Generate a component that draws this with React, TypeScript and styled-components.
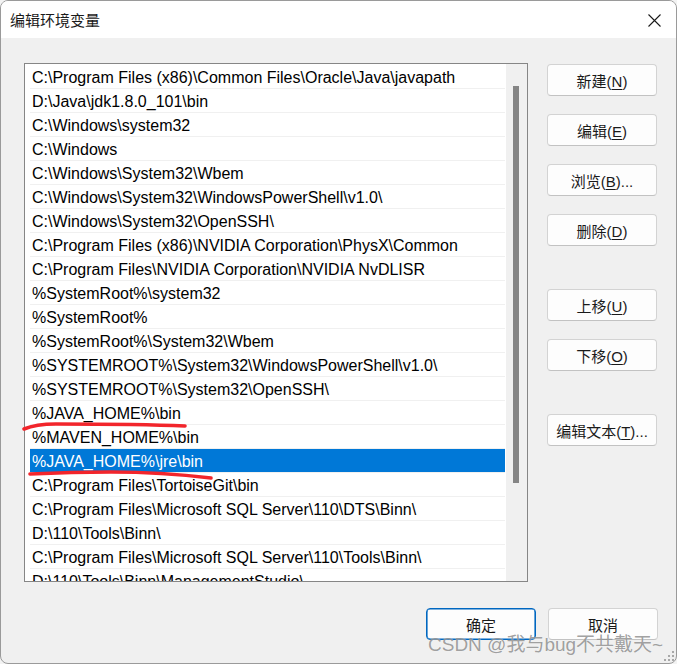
import React from "react";
import styled, { createGlobalStyle } from "styled-components";

const Global = createGlobalStyle`
  html, body { margin: 0; padding: 0; background: #f3f3f3; }
  body { font-family: "Liberation Sans", "Noto Sans CJK SC", sans-serif; }
  * { box-sizing: border-box; }
`;

const Window = styled.div`
  position: relative;
  width: 677px;
  height: 664px;
  background: #f0f0f0;
  border: 1px solid #9a9a9a;
  border-radius: 8px;
  overflow: hidden;
  display: flex;
  flex-direction: column;
  color: #000;
`;

const TitleBar = styled.div`
  height: 37px;
  flex: none;
  background: #ffffff;
  display: flex;
  align-items: center;
  justify-content: space-between;
  padding: 0 15px 0 9px;
`;

const Title = styled.div`
  font-family: "Noto Sans CJK SC", sans-serif;
  font-size: 15px;
  color: #1a1a1a;
  padding-bottom: 1px;
`;

const CloseBtn = styled.div`
  width: 13px;
  height: 13px;
  display: flex;
  margin-top: 1px;
`;

const Body = styled.div`
  display: flex;
  gap: 19px;
  padding: 25px 19px 0 23px;
`;

const ListBox = styled.div`
  width: 504px;
  height: 519px;
  border: 1px solid #868686;
  background: #ffffff;
  display: flex;
  flex: none;
`;

const Items = styled.div`
  flex: 1;
  overflow: hidden;
  padding: 1px 1px 0 5px;
`;

const Row = styled.div<{ $selected?: boolean }>`
  height: 24px;
  line-height: 21px;
  padding-top: 1.5px;
  border-bottom: 1px solid #f0f0f0;
  padding-left: 2px;
  font-size: 16px;
  white-space: nowrap;
  background: ${(p) => (p.$selected ? "#0078d7" : "transparent")};
  color: ${(p) => (p.$selected ? "#ffffff" : "#000000")};
`;

const ScrollTrack = styled.div`
  width: 21px;
  flex: none;
  background: #f0f0f0;
  padding: 22px 0 0 7px;
`;

const Thumb = styled.div`
  width: 6px;
  height: 397px;
  background: #858585;
`;

const ButtonColumn = styled.div`
  display: flex;
  flex-direction: column;
  gap: 18px;
  padding-top: 1px;
`;

const Button = styled.button<{ $primary?: boolean; $groupStart?: boolean }>`
  width: 110px;
  height: 32px;
  flex: none;
  margin-top: ${(p) => (p.$groupStart ? "25px" : "0")};
  background: #fdfdfd;
  border: 1px solid ${(p) => (p.$primary ? "#0067c0" : "#d3d3d3")};
  border-bottom-color: ${(p) => (p.$primary ? "#0067c0" : "#c2c2c2")};
  box-shadow: ${(p) => (p.$primary ? "inset 0 0 0 0.6px #0067c0" : "none")};
  border-radius: 4px;
  font-family: "Liberation Sans", "Noto Sans CJK SC", sans-serif;
  font-size: 15px;
  color: #1a1a1a;
  padding: 0;
  display: flex;
  align-items: center;
  justify-content: center;
  u { text-underline-offset: 2px; }
`;

const Footer = styled.div`
  display: flex;
  justify-content: flex-end;
  gap: 12px;
  padding: 26px 18px 0 0;
`;

const Marks = styled.svg`
  position: absolute;
  left: 0;
  top: 0;
  pointer-events: none;
`;

const Watermark = styled.div`
  position: absolute;
  left: 427px;
  top: 628px;
  font-family: "Liberation Sans", "Noto Sans CJK SC", sans-serif;
  font-size: 19px;
  color: rgba(100, 100, 100, 0.62);
  text-shadow: 0 0 1px rgba(255, 255, 255, 0.8);
  white-space: nowrap;
  pointer-events: none;
`;

const Grip = styled.svg`
  position: absolute;
  right: 1px;
  bottom: 1px;
`;

const paths = [
  "C:\\Program Files (x86)\\Common Files\\Oracle\\Java\\javapath",
  "D:\\Java\\jdk1.8.0_101\\bin",
  "C:\\Windows\\system32",
  "C:\\Windows",
  "C:\\Windows\\System32\\Wbem",
  "C:\\Windows\\System32\\WindowsPowerShell\\v1.0\\",
  "C:\\Windows\\System32\\OpenSSH\\",
  "C:\\Program Files (x86)\\NVIDIA Corporation\\PhysX\\Common",
  "C:\\Program Files\\NVIDIA Corporation\\NVIDIA NvDLISR",
  "%SystemRoot%\\system32",
  "%SystemRoot%",
  "%SystemRoot%\\System32\\Wbem",
  "%SYSTEMROOT%\\System32\\WindowsPowerShell\\v1.0\\",
  "%SYSTEMROOT%\\System32\\OpenSSH\\",
  "%JAVA_HOME%\\bin",
  "%MAVEN_HOME%\\bin",
  "%JAVA_HOME%\\jre\\bin",
  "C:\\Program Files\\TortoiseGit\\bin",
  "C:\\Program Files\\Microsoft SQL Server\\110\\DTS\\Binn\\",
  "D:\\110\\Tools\\Binn\\",
  "C:\\Program Files\\Microsoft SQL Server\\110\\Tools\\Binn\\",
  "D:\\110\\Tools\\Binn\\ManagementStudio\\",
];

const SELECTED = 16;

function Label({ text, k, tail }: { text: string; k: string; tail?: string }) {
  return (
    <span>
      {text}(<u>{k}</u>){tail}
    </span>
  );
}

export default function App() {
  return (
    <>
      <Global />
      <Window>
        <TitleBar>
          <Title>编辑环境变量</Title>
          <CloseBtn>
            <svg width="13" height="13" viewBox="0 0 13 13">
              <path d="M0.5 0.5 L12.5 12.5 M12.5 0.5 L0.5 12.5" stroke="#1a1a1a" strokeWidth="1.1" fill="none" />
            </svg>
          </CloseBtn>
        </TitleBar>
        <Body>
          <ListBox>
            <Items>
              {paths.map((p, i) => (
                <Row key={i} $selected={i === SELECTED}>
                  {p}
                </Row>
              ))}
            </Items>
            <ScrollTrack>
              <Thumb />
            </ScrollTrack>
          </ListBox>
          <ButtonColumn>
            <Button><Label text="新建" k="N" /></Button>
            <Button><Label text="编辑" k="E" /></Button>
            <Button><Label text="浏览" k="B" tail="..." /></Button>
            <Button><Label text="删除" k="D" /></Button>
            <Button $groupStart><Label text="上移" k="U" /></Button>
            <Button><Label text="下移" k="O" /></Button>
            <Button $groupStart><Label text="编辑文本" k="T" tail="..." /></Button>
          </ButtonColumn>
        </Body>
        <Footer>
          <Button $primary>确定</Button>
          <Button>取消</Button>
        </Footer>
        <Marks width="677" height="664" viewBox="0 0 677 664">
          <path
            d="M23 428 C 30 425, 40 423, 55 423 C 90 423, 140 423, 184 425"
            stroke="#f2252b"
            strokeWidth="3.6"
            strokeLinecap="round"
            fill="none"
          />
          <path
            d="M29 473 C 50 472, 80 471, 110 471 C 150 471, 185 474, 210 477"
            stroke="#f2252b"
            strokeWidth="3.6"
            strokeLinecap="round"
            fill="none"
          />
        </Marks>
        <Watermark>CSDN @我与bug不共戴天~</Watermark>
        <Grip width="12" height="12" viewBox="0 0 12 12">
          {[
            [9, 1], [9, 5], [5, 5], [9, 9], [5, 9], [1, 9],
          ].map(([x, y], i) => (
            <rect key={i} x={x} y={y} width="2" height="2" fill="#a8a8a8" />
          ))}
        </Grip>
      </Window>
    </>
  );
}
